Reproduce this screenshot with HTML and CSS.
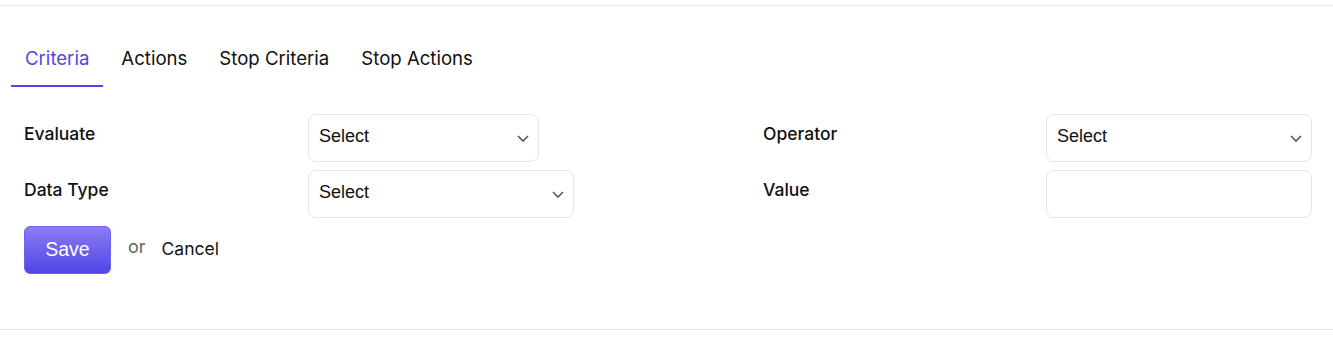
FILE: index.html
```html
<!DOCTYPE html>
<html lang="en">
<head>
    <meta charset="UTF-8">
    <meta name="viewport" content="width=device-width, initial-scale=1.0">
    <title>Rule Criteria</title>
    <link rel="stylesheet" href="styles.css">
</head>
<body>
    <div class="panel">
        <div class="tabs">
            <div class="tab active">Criteria</div>
            <div class="tab">Actions</div>
            <div class="tab">Stop Criteria</div>
            <div class="tab">Stop Actions</div>
        </div>

        <div class="form-grid">
            <label class="field-label">Evaluate</label>
            <div class="select short">
                <span>Select</span>
                <svg class="chevron" width="12" height="7" viewBox="0 0 12 7"><path d="M1 1l5 5 5-5" fill="none" stroke="#555" stroke-width="1.6"/></svg>
            </div>
            <div class="spacer"></div>
            <label class="field-label">Operator</label>
            <div class="select">
                <span>Select</span>
                <svg class="chevron" width="12" height="7" viewBox="0 0 12 7"><path d="M1 1l5 5 5-5" fill="none" stroke="#555" stroke-width="1.6"/></svg>
            </div>

            <label class="field-label">Data Type</label>
            <div class="select">
                <span>Select</span>
                <svg class="chevron" width="12" height="7" viewBox="0 0 12 7"><path d="M1 1l5 5 5-5" fill="none" stroke="#555" stroke-width="1.6"/></svg>
            </div>
            <div class="spacer"></div>
            <label class="field-label">Value</label>
            <div class="text-input"></div>
        </div>

        <div class="actions">
            <div class="save-button">Save</div>
            <span class="or">or</span>
            <span class="cancel">Cancel</span>
        </div>
    </div>
</body>
</html>
```

FILE: styles.css
```css
body {
    margin: 0;
    background-color: #ffffff;
    font-family: Inter, "Liberation Sans", sans-serif;
    color: #111111;
}

.panel {
    margin-top: 5px;
    border-top: 1px solid #ececec;
    border-bottom: 1px solid #e6e6e6;
    height: 325px;
    box-sizing: border-box;
}

.tabs {
    display: flex;
    gap: 4px;
    padding: 0 11px;
    margin-top: 35px;
}

.tab {
    padding: 0 14px;
    height: 46px;
    line-height: 34px;
    font-size: 18.6px;
    color: #111111;
    box-sizing: border-box;
}

.tab.active {
    color: #5046e5;
    border-bottom: 2px solid #4f46e5;
}

.form-grid {
    display: grid;
    grid-template-columns: 284px 266px 1fr 283px 266px;
    grid-auto-rows: 48px;
    row-gap: 8px;
    padding: 0 21px 0 24px;
    margin-top: 27px;
}

.field-label {
    font-size: 17.5px;
    font-weight: 500;
    line-height: 24px;
    padding-top: 8px;
    color: #111111;
}

.select,
.text-input {
    border: 1px solid #e5e5e5;
    border-radius: 8px;
    box-sizing: border-box;
    height: 48px;
}

.select {
    display: flex;
    align-items: center;
    justify-content: space-between;
    padding: 0 9px 0 10px;
    font-family: "Liberation Sans", Arial, sans-serif;
    font-size: 18px;
    color: #111111;
}

.select span {
    margin-top: -4px;
}

.select.short {
    width: 231px;
}

.chevron {
    margin-top: 1px;
}

.actions {
    display: flex;
    align-items: center;
    padding: 0 24px;
    margin-top: 8px;
}

.save-button {
    width: 87px;
    height: 48px;
    border-radius: 6px;
    background: linear-gradient(to bottom, #8b7cf6, #4f46e5);
    color: #ffffff;
    font-family: "Liberation Sans", Arial, sans-serif;
    font-size: 19.5px;
    display: flex;
    align-items: center;
    justify-content: center;
    box-sizing: border-box;
    border: 1px solid #6d63ee;
    padding-bottom: 2px;
}

.or {
    margin-left: 17px;
    color: #666666;
    font-size: 18px;
    margin-top: -7px;
}

.cancel {
    margin-left: 16px;
    font-size: 17.5px;
    margin-top: -3px;
}
```
